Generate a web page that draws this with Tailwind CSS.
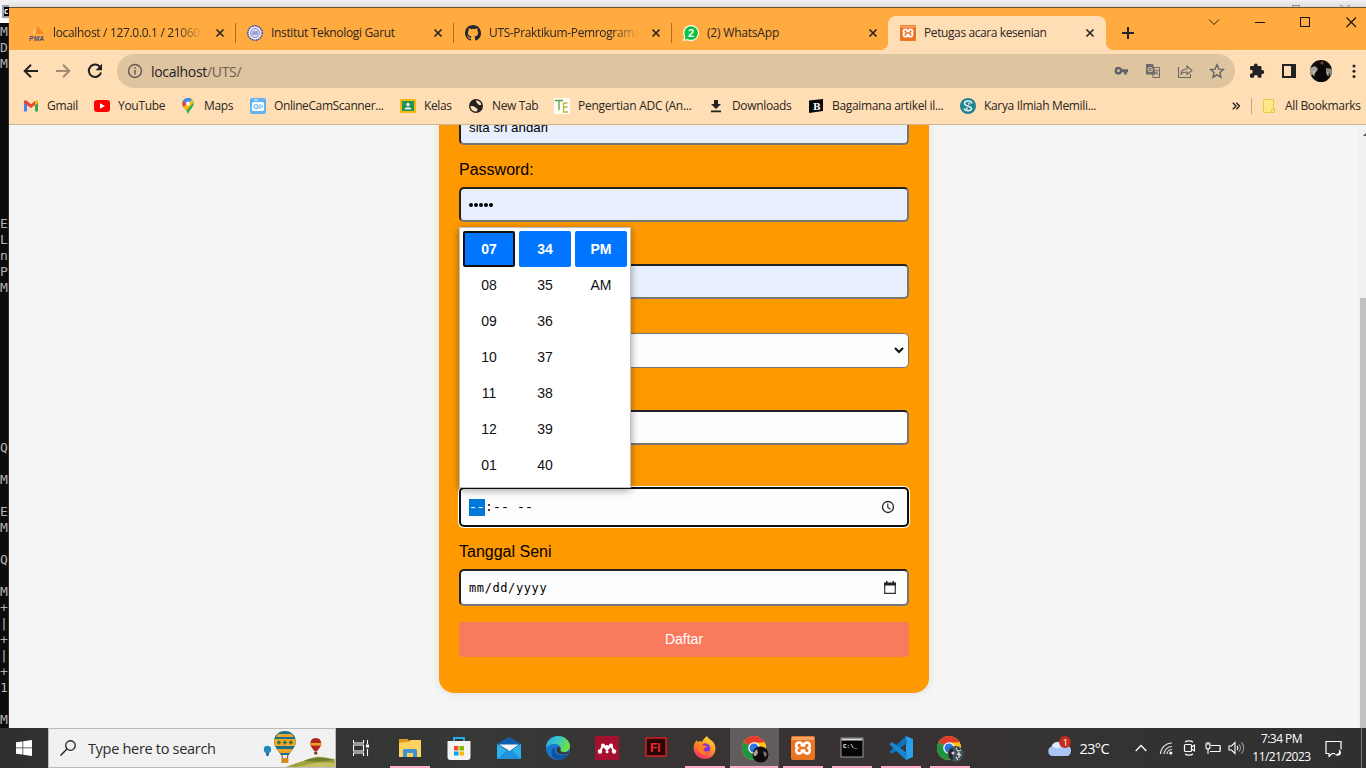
<!DOCTYPE html>
<html lang="id">
<head>
<meta charset="utf-8">
<title>Petugas acara kesenian</title>
<script src="https://cdn.jsdelivr.net/npm/@tailwindcss/browser@4"></script>
</head>
<body class="w-[1366px] h-[768px] overflow-hidden bg-white font-['Open_Sans',sans-serif] text-[#2b2622]">
<svg class="hidden">
  <defs>
    <symbol id="close" viewBox="0 0 10 10"><path d="M1.5 1.5l7 7M8.5 1.5l-7 7" stroke="#2b2622" stroke-width="1.7" fill="none"/></symbol>
    <symbol id="xampp" viewBox="0 0 24 24"><rect width="24" height="24" rx="2" fill="#e97523"/><rect x="1" y="1" width="22" height="3" fill="#f6a468"/><path d="M8 6.500a3 3 0 0 0-1.500 5.500A3 3 0 1 0 11 15.500v-1h2v1A3 3 0 1 0 17.500 12 3 3 0 1 0 13 8.500v1h-2v-1A3 3 0 0 0 8 6.500z" fill="none" stroke="#fff" stroke-width="2.600"/></symbol>
    <symbol id="chrome" viewBox="0 0 24 24"><circle cx="12" cy="12" r="12" fill="#fbc116"/><path d="M12 12L1.600 6A12 12 0 0 1 22.400 6z" fill="#e33b2e"/><path d="M1.600 6A12 12 0 0 0 12 24l5.200-9-5.200-3z" fill="#229342"/><path d="M12 6.500h10.700A12 12 0 0 1 12 24l5-9z" fill="#fbc116"/><circle cx="12" cy="12" r="5.800" fill="#fff"/><circle cx="12" cy="12" r="4.500" fill="#2a75e8"/></symbol>
  </defs>
</svg>
<div class="flex flex-col w-[1366px] h-[768px]">
  <div class="flex h-[728px]">
    <!-- console window behind the browser -->
    <div class="w-[9px] shrink-0 flex flex-col overflow-hidden bg-[#0c0c0c]">
      <div class="h-[23px] shrink-0 bg-gradient-to-b from-[#f0f0f0] to-white pt-[5px] pl-[2px]">
        <div class="w-[12px] h-[13px] bg-black border-2 border-[#9aa0a6] text-white text-[8px] leading-[8px] font-bold">c</div>
      </div>
      <pre class="pt-px w-[9px] border-r border-[#2a2a2a] overflow-hidden font-['DejaVu_Sans_Mono',monospace] text-[13px] leading-[16px] text-[#b4b4b4]">M
D
M









E
L
n
P
M









Q

M

E
M

Q

M
+
|
+
|
+
1

M</pre>
    </div>
    <!-- browser window -->
    <div class="flex-1 min-w-0 flex flex-col">
      <div class="h-[7px] shrink-0 bg-gradient-to-b from-[#f3f3f3] to-[#dcdcdc] flex justify-end items-end pr-[16px] gap-[40px]">
        <div class="w-[8px] h-[2px] border border-b-0 border-[#888]"></div>
        <svg class="w-[10px] h-[2px]" viewBox="0 0 10 2"><path d="M0 0l3 2M10 0L7 2" stroke="#888"/></svg>
      </div>
      <!-- tab strip -->
      <div class="h-[43px] shrink-0 border-t border-[#6b5330] bg-[#ffab40] flex items-end pl-[9px] text-[12px]">
        <div class="w-[218px] h-[34px] flex items-center pl-[11px] relative">
          <svg class="w-4 h-4 shrink-0" viewBox="0 0 16 16"><path d="M4 9c0-3 1-5 2-7v7z" fill="#f9c28a"/><path d="M7 9c1-3 1-5 0-8 4 2 6 5 8 8z" fill="#f58a1f"/><text x="0" y="15.500" font-family="Liberation Sans" font-size="6.500" font-weight="bold" font-style="italic" fill="#444a77" letter-spacing=".3">PMA</text></svg>
          <span class="ml-2 w-[150px] overflow-hidden whitespace-nowrap tracking-[-0.33px] [mask-image:linear-gradient(90deg,#000_82%,transparent)]">localhost / 127.0.0.1 / 21060</span>
          <svg class="w-[10px] h-[10px] ml-3"><use href="#close"/></svg>
          <div class="absolute right-0 top-[7px] w-px h-5 bg-[#a96f24]"></div>
        </div>
        <div class="w-[218px] h-[34px] flex items-center pl-[11px] relative">
          <svg class="w-4 h-4 shrink-0" viewBox="0 0 16 16"><circle cx="8" cy="8" r="7.200" fill="#eef" stroke="#3f4796" stroke-width="1.500" stroke-dasharray="1.500 .7"/><circle cx="8" cy="8" r="4.500" fill="#dcdff2" stroke="#8088c0"/><path d="M5 7h6M5 9h6" stroke="#6068b0"/></svg>
          <span class="ml-2 w-[150px] overflow-hidden whitespace-nowrap tracking-[-0.34px]">Institut Teknologi Garut</span>
          <svg class="w-[10px] h-[10px] ml-3"><use href="#close"/></svg>
          <div class="absolute right-0 top-[7px] w-px h-5 bg-[#a96f24]"></div>
        </div>
        <div class="w-[218px] h-[34px] flex items-center pl-[11px] relative">
          <svg class="w-4 h-4 shrink-0" viewBox="0 0 16 16" fill="#24292f"><path d="M8 0C3.58 0 0 3.58 0 8c0 3.54 2.29 6.53 5.47 7.59.4.07.55-.17.55-.38v-1.490c-2.010.37-2.530-.49-2.690-.94-.09-.23-.48-.94-.82-1.130-.28-.15-.68-.52-.01-.53.63-.01 1.080.58 1.230.82.72 1.210 1.870.87 2.330.66.07-.52.28-.87.51-1.070-1.780-.2-3.640-.89-3.640-3.950 0-.87.31-1.590.82-2.150-.08-.2-.36-1.020.08-2.120 0 0 .67-.21 2.200.82a7.600 7.600 0 0 1 4 0c1.530-1.040 2.200-.82 2.200-.82.44 1.100.16 1.920.08 2.120.51.56.82 1.270.82 2.150 0 3.070-1.870 3.750-3.650 3.950.29.25.54.73.54 1.480v2.200c0 .21.15.46.55.38A8.010 8.010 0 0 0 16 8c0-4.420-3.580-8-8-8z"/></svg>
          <span class="ml-2 w-[150px] overflow-hidden whitespace-nowrap tracking-[-0.36px] [mask-image:linear-gradient(90deg,#000_82%,transparent)]">UTS-Praktikum-Pemrograma</span>
          <svg class="w-[10px] h-[10px] ml-3"><use href="#close"/></svg>
          <div class="absolute right-0 top-[7px] w-px h-5 bg-[#a96f24]"></div>
        </div>
        <div class="w-[216px] h-[34px] flex items-center pl-[11px]">
          <svg class="w-4 h-4 shrink-0" viewBox="0 0 16 16"><path d="M8 0a8 8 0 1 1-3.500 15.200L0 16l1-4.500A8 8 0 0 1 8 0z" fill="#fff"/><path d="M8 1.200a6.800 6.800 0 1 1-3.300 12.700L1.600 14.500l.8-3A6.800 6.800 0 0 1 8 1.200z" fill="#0ac33c"/><text x="5" y="12" font-family="Liberation Sans" font-size="11" font-weight="bold" fill="#fff">2</text></svg>
          <span class="ml-2 w-[149px] overflow-hidden whitespace-nowrap tracking-[-0.2px]">(2) WhatsApp</span>
          <svg class="w-[10px] h-[10px] ml-3"><use href="#close"/></svg>
        </div>
        <div class="w-[218px] h-[34px] flex items-center pl-3 bg-[#ffdeb5] rounded-t-lg relative before:absolute before:bottom-0 before:-left-2 before:size-2 before:bg-[radial-gradient(circle_at_0_0,transparent_8px,#ffdeb5_8.5px)] after:absolute after:bottom-0 after:-right-2 after:size-2 after:bg-[radial-gradient(circle_at_100%_0,transparent_8px,#ffdeb5_8.5px)]">
          <svg class="w-4 h-4 shrink-0"><use href="#xampp"/></svg>
          <span class="ml-2 w-[149px] overflow-hidden whitespace-nowrap tracking-[-0.4px]">Petugas acara kesenian</span>
          <svg class="w-[10px] h-[10px] ml-3"><use href="#close"/></svg>
        </div>
        <svg class="w-[12px] h-[12px] ml-[16px] mb-[11px]" viewBox="0 0 12 12"><path d="M6 0v12M0 6h12" stroke="#222" stroke-width="2"/></svg>
        <div class="flex items-center gap-[35px] ml-[74px] mb-[22px]">
          <svg class="w-[12px] h-[12px]" viewBox="0 0 12 12"><path d="M1 3.500l5 5 5-5" fill="none" stroke="#222"/></svg>
          <svg class="w-[10px] h-[12px]" viewBox="0 0 10 12"><path d="M0 6.500h10" stroke="#111"/></svg>
          <svg class="w-[11px] h-[12px]" viewBox="0 0 11 12"><rect x=".5" y="1.500" width="9" height="9" fill="none" stroke="#111"/></svg>
          <svg class="w-[11px] h-[12px]" viewBox="0 0 11 12"><path d="M.5 1.500l9.500 9.500M10 1.500L.5 11" stroke="#111" stroke-width="1.100"/></svg>
        </div>
      </div>
      <!-- toolbar -->
      <div class="h-[38px] shrink-0 bg-[#ffdeb5] flex items-end">
        <div class="h-[34px] flex items-center pl-[14px] gap-[16px]">
          <svg class="w-4 h-4" viewBox="0 0 16 16"><path d="M15 8H2M8 1.700L1.700 8 8 14.300" fill="none" stroke="#222" stroke-width="2"/></svg>
          <svg class="w-4 h-4" viewBox="0 0 16 16"><path d="M1 8h13M8 1.700L14.300 8 8 14.300" fill="none" stroke="#a08c76" stroke-width="2"/></svg>
          <svg class="w-4 h-4" viewBox="0 0 16 16"><path d="M13.300 4.500A6.200 6.200 0 1 0 14 9.500" fill="none" stroke="#222" stroke-width="2"/><path d="M15 .8v6.400H8.600z" fill="#222"/></svg>
        </div>
        <div class="ml-[14px] w-[1118px] h-[34px] rounded-full bg-[#dfc4a0] flex items-center pl-[10px] pr-[10px]">
          <svg class="w-4 h-4" viewBox="0 0 16 16"><circle cx="8" cy="8" r="6.500" fill="none" stroke="#5f5a55" stroke-width="1.400"/><path d="M8 7v4.500M8 4.200v1.600" stroke="#5f5a55" stroke-width="1.500"/></svg>
          <span class="ml-2 text-[14px] tracking-[-0.3px] flex-1 whitespace-nowrap text-[#222]">localhost<span class="text-[#6b5e50]">/UTS/</span></span>
          <div class="flex items-center gap-4">
            <svg class="w-4 h-4" viewBox="0 0 16 16"><path d="M5.500 3.800a3.900 3.900 0 1 0 3.600 5.400H11v2.300h2.800V9.200H15V6.300H9.100a3.900 3.900 0 0 0-3.600-2.500zm0 2.500a1.400 1.400 0 1 1 0 2.800 1.400 1.400 0 0 1 0-2.800z" fill="#5f6368"/></svg>
            <svg class="w-4 h-4" viewBox="0 0 16 16"><path d="M7 4.500h7.500v10H8z" fill="none" stroke="#6b6b6b"/><path d="M1 1h7l3 10.500H1z" fill="#6b6b6b"/><text x="2.300" y="8.800" font-size="7.500" font-weight="bold" font-family="Liberation Sans" fill="#dfc4a0">G</text><path d="M9.500 7.500h4M11.500 6.500v1M13 7.500c-.5 2-1.500 3-2.500 4M11 9l2.500 3" stroke="#6b6b6b" fill="none" stroke-width=".8"/></svg>
            <svg class="w-4 h-4" viewBox="0 0 16 16"><path d="M1.500 4v10.500h12V11M4 11c.5-3.500 3-5 6-5V3l5 4.500-5 4V9c-2.500 0-4.500.5-6 2z" fill="none" stroke="#6b6b6b" stroke-width="1.100"/></svg>
            <svg class="w-4 h-4" viewBox="0 0 16 16"><path d="M8 1.800l1.900 4.300 4.600.4-3.500 3.100 1 4.600L8 11.800l-4 2.400 1-4.600L1.500 6.500l4.600-.4z" fill="none" stroke="#5f6368" stroke-width="1.400"/></svg>
          </div>
        </div>
        <div class="h-[34px] flex items-center ml-[14px]">
          <svg class="w-4 h-4" viewBox="0 0 16 16"><path d="M13.300 7H12.500V4.300c0-.8-.6-1.400-1.400-1.400H8.700V2.300a1.900 1.900 0 0 0-3.800 0v.6H2.300C1.500 2.900 1 3.500 1 4.300v2.400h.7a2 2 0 0 1 0 4H1v2.700c0 .8.5 1.400 1.300 1.400h2.600v-.7a2 2 0 0 1 4 0v.7h2.200c.8 0 1.400-.6 1.400-1.400V11h.8a2 2 0 0 0 0-4z" fill="#222"/></svg>
          <svg class="w-4 h-4 ml-4" viewBox="0 0 16 16"><path d="M1 1h14v14H1zM3 3v10h7V3z" fill="#222" fill-rule="evenodd"/></svg>
          <svg class="w-[22px] h-[22px] ml-[13px]" viewBox="0 0 22 22"><clipPath id="av"><circle cx="11" cy="11" r="11"/></clipPath><g clip-path="url(#av)"><rect width="22" height="22" fill="#0f0d0c"/><path d="M0 8l5-2 3 3-2 3-2 2-4 2z" fill="#a8a195"/><path d="M16 8l6 1v6l-2 1-1-4-2 3-1-2z" fill="#8d877d"/><circle cx="12" cy="3" r="1.500" fill="#8a3c30"/><path d="M9 6h6l2 16H8z" fill="#0a0808"/><path d="M4 11v5M18 12v4" stroke="#ddd"/></g></svg>
          <svg class="w-[4px] h-4 ml-[20px]" viewBox="0 0 4 16" fill="#222"><circle cx="2" cy="3" r="1.500"/><circle cx="2" cy="8.300" r="1.500"/><circle cx="2" cy="13.500" r="1.500"/></svg>
        </div>
      </div>
      <!-- bookmarks bar -->
      <div class="h-[37px] shrink-0 bg-[#ffdeb5] border-b border-[#cfb48e] flex items-center pl-[14px] text-[12px] whitespace-nowrap tracking-[-0.34px]">
        <div class="w-[71px] flex items-center gap-2"><svg class="w-4 h-4" viewBox="0 0 16 16"><path d="M1 3v10.500h3V7z" fill="#4285f4"/><path d="M15 3v10.500h-3V7z" fill="#34a853"/><path d="M1 3.500C1 2 3 2 4 3l4 3.200L12 3v4L8 10 4 7.200 1 5z" fill="#ea4335"/><path d="M12 3c1-1 3-1 3 .5V5l-3 2z" fill="#fbbc04"/></svg><span>Gmail</span></div>
        <div class="w-[86px] flex items-center gap-2"><svg class="w-4 h-4" viewBox="0 0 16 16"><rect y="2" width="16" height="12" rx="3" fill="#f00"/><path d="M6 5.200L11 8l-5 2.800z" fill="#fff"/></svg><span class="tracking-[-0.3px]">YouTube</span></div>
        <div class="w-[70px] flex items-center gap-2"><svg class="w-4 h-4" viewBox="0 0 16 16"><clipPath id="pin"><path d="M8 0a5.500 5.500 0 0 1 5.500 5.500C13.500 9.500 9.500 11 8 16 6.500 11 2.500 9.500 2.500 5.500A5.500 5.500 0 0 1 8 0z"/></clipPath><g clip-path="url(#pin)"><rect width="16" height="16" fill="#34a853"/><path d="M0 0h12L2 11H0z" fill="#4285f4"/><path d="M2 2l5 4-4 5-2-5z" fill="#ea4335"/><path d="M3 10l8-9 3 3-8 9z" fill="#fbbc04"/><path d="M7 0h6L9 5z" fill="#4285f4"/><path d="M14 2v14H6l7-9z" fill="#34a853"/></g><circle cx="8" cy="5.500" r="2" fill="#fff"/></svg><span>Maps</span></div>
        <div class="w-[150px] flex items-center gap-2"><svg class="w-4 h-4" viewBox="0 0 16 16"><rect width="16" height="16" rx="2" fill="#60b4f5"/><rect x="2" y="4" width="12" height="9" rx="1.500" fill="#fff"/><circle cx="6" cy="8.500" r="2" fill="none" stroke="#60b4f5" stroke-width="1.200"/><path d="M10 6v5M12 7v3" stroke="#60b4f5"/><path d="M4 2h4" stroke="#fff"/></svg><span class="tracking-[-0.4px]">OnlineCamScanner...</span></div>
        <div class="w-[68px] flex items-center gap-2"><svg class="w-4 h-4" viewBox="0 0 16 16"><rect y="1" width="16" height="14" rx="1" fill="#f4b912"/><rect x="2" y="3" width="12" height="10" fill="#23935a"/><circle cx="8" cy="6.500" r="1.700" fill="#e8f5e9"/><path d="M4.500 11.500c0-3.500 7-3.500 7 0z" fill="#d5ecd9"/></svg><span class="tracking-[-0.4px]">Kelas</span></div>
        <div class="w-[86px] flex items-center gap-2"><svg class="w-4 h-4" viewBox="0 0 16 16"><circle cx="8" cy="8" r="7" fill="#222"/><path d="M8 2.500c3 0 5 2 5.300 4.200-1.500.9-3.300 0-3.800-1.200C9 4.500 7.500 4 8 2.500zM2.500 8c2 0 4 0 5 1.500s2.500.5 2 2.500-1.500 1.500-2.500 1.500C4 13 2.500 11 2.500 8z" fill="#ffdeb5"/></svg><span class="tracking-[-0.35px]">New Tab</span></div>
        <div class="w-[154px] flex items-center gap-2"><svg class="w-4 h-4" viewBox="0 0 16 16"><rect width="16" height="16" fill="#fdfdf5"/><path d="M1 2.500h8M5 2.500V12" stroke="#59a14a" stroke-width="1.300"/><path d="M13.500 5H9.500v9h4.500M9.500 9h4" stroke="#b9b832" fill="none" stroke-width="1.300"/></svg><span class="tracking-[-0.25px]">Pengertian ADC (An...</span></div>
        <div class="w-[100px] flex items-center gap-2"><svg class="w-4 h-4" viewBox="0 0 16 16"><path d="M6 2h4v4h3l-5 5-5-5h3zM3 12.500h10v1.700H3z" fill="#222"/></svg><span>Downloads</span></div>
        <div class="w-[152px] flex items-center gap-2"><svg class="w-4 h-4" viewBox="0 0 16 16"><path d="M1 2.500L15 1v12l-14 2z" fill="#080808"/><text x="5" y="11.500" font-family="DejaVu Serif" font-size="9" font-weight="bold" fill="#fff">B</text></svg><span>Bagaimana artikel il...</span></div>
        <div class="w-[272px] flex items-center gap-2"><svg class="w-4 h-4" viewBox="0 0 16 16"><circle cx="8" cy="8" r="8" fill="#1f8391"/><path d="M12 5.500C11 2 4.500 2.500 4.500 5.500S11.500 8 11.500 10.500 5.500 14 4 10.500" fill="none" stroke="#e4f2f3" stroke-width="1.500"/><circle cx="9" cy="5.700" r="1" fill="#e4f2f3"/><circle cx="7" cy="10.500" r="1" fill="#e4f2f3"/></svg><span>Karya Ilmiah Memili...</span></div>
        <svg class="w-[8px] h-[8px]" viewBox="0 0 8 8"><path d="M.8.8L4 4 .8 7.200M4.300.8L7.500 4 4.300 7.200" fill="none" stroke="#222" stroke-width="1.400"/></svg>
        <div class="w-px h-4 bg-[#c4a982] ml-[11px]"></div>
        <svg class="w-[12px] h-[14px] ml-[11px]" viewBox="0 0 12 14"><path d="M.5.5h10v9h1v4h-11z" fill="#ffe68a" stroke="#ecc944"/><path d="M8.500 13.500v-3h3" fill="none" stroke="#ecc944"/></svg>
        <span class="ml-[10px]">All Bookmarks</span>
      </div>
      <!-- page viewport -->
      <div class="h-[603px] shrink-0 bg-[#f5f5f5] overflow-hidden flex pl-[430px] font-['Liberation_Sans',sans-serif] text-black">
        <div class="w-[490px] h-[568px] shrink-0 px-5 bg-[#ff9900] rounded-b-[15px] shadow-[0_0_10px_rgba(0,0,0,0.1)] flex flex-col relative">
          <div class="-mt-[15px] h-[35px] shrink-0 rounded-[5px] border-2 border-[#222] border-r-[#767676] border-b-[#767676] bg-[#e8f0fe] px-2 text-[13.3px] leading-[31px]">sita sri andari</div>
          <label class="mt-[16px] h-[18px] leading-[18px] text-[16px]">Password:</label>
          <div class="mt-[8px] h-[35px] rounded-[5px] border-2 border-[#222] border-r-[#767676] border-b-[#767676] bg-[#e8f0fe] px-[8px] flex items-center gap-px">
            <i class="size-[4px] rounded-full bg-black"></i><i class="size-[4px] rounded-full bg-black"></i><i class="size-[4px] rounded-full bg-black"></i><i class="size-[4px] rounded-full bg-black"></i><i class="size-[4px] rounded-full bg-black"></i>
          </div>
          <div class="mt-[42px] h-[35px] rounded-[5px] border-2 border-[#222] border-r-[#767676] border-b-[#767676] bg-[#e8f0fe]"></div>
          <div class="mt-[34px] h-[35px] rounded-[5px] border border-[#767676] bg-[#fdfdfd] flex items-center justify-end pr-[4px]">
            <svg class="w-[10px] h-[7px]" viewBox="0 0 10 7"><path d="M1 1l4 4 4-4" fill="none" stroke="#111" stroke-width="2.100"/></svg>
          </div>
          <div class="mt-[42px] h-[35px] rounded-[5px] border-2 border-[#222] border-r-[#767676] border-b-[#767676] bg-[#fdfdfd]"></div>
          <div class="mt-[42px] h-[40px] rounded-[5px] border-2 border-[#101010] bg-[#fdfdfd] ring-1 ring-white flex items-center justify-between pl-[8px] pr-[12px] font-['Liberation_Mono',monospace] text-[13px]">
            <div class="flex items-center whitespace-pre"><span class="bg-[#0078d7] text-white h-[17px] leading-[18px] w-[16px]">--</span><span class="leading-[19px] tracking-[0.2px]">:-- --</span></div>
            <svg class="w-[14px] h-[14px]" viewBox="0 0 14 14"><circle cx="7" cy="7" r="5.500" fill="none" stroke="#222" stroke-width="1.300"/><path d="M6.800 3.500v4l2.700 1.700" fill="none" stroke="#222" stroke-width="1.100"/></svg>
          </div>
          <label class="mt-[16px] h-[18px] leading-[18px] text-[16px]">Tanggal Seni</label>
          <div class="mt-[8px] h-[37px] rounded-[5px] border-2 border-[#222] border-r-[#767676] border-b-[#767676] bg-[#fdfdfd] flex items-center justify-between pl-[8px] pr-[11px]">
            <span class="font-['DejaVu_Sans_Mono',monospace] text-[12px] tracking-[0.6px]">mm/dd/yyyy</span>
            <svg class="w-[12px] h-[14px]" viewBox="0 0 12 14"><path d="M.7 3v9.300h10.600V3" fill="none" stroke="#333" stroke-width="1.200"/><path d="M0 1.500h12v3H0zM2 0h1.500v2H2zM8.500 0H10v2H8.500z" fill="#222"/></svg>
          </div>
          <button class="mt-[16px] h-[35px] rounded-[3px] bg-[#fa7a5e] text-white text-[14px]">Daftar</button>
          <!-- time picker -->
          <div class="absolute left-[20px] top-[102px] w-[172px] h-[261px] border border-[#bfbfbf] bg-white shadow-[0_2px_8px_rgba(0,0,0,0.4)] p-[3px] flex gap-1 text-[14px] text-[#101010] text-center leading-[36px]">
            <div class="w-[52px]"><div class="h-9 leading-[32px] bg-[#0075ff] border-2 border-[#101010] rounded-[2px] text-white font-bold">07</div><div>08</div><div>09</div><div>10</div><div>11</div><div>12</div><div>01</div></div>
            <div class="w-[52px]"><div class="h-9 bg-[#0075ff] rounded-[2px] text-white font-bold">34</div><div>35</div><div>36</div><div>37</div><div>38</div><div>39</div><div>40</div></div>
            <div class="w-[52px]"><div class="h-9 bg-[#0075ff] rounded-[2px] text-white font-bold">PM</div><div>AM</div></div>
          </div>
        </div>
        <div class="w-[8px] ml-auto bg-[#f1f1f1] flex flex-col items-end">
          <svg class="w-[3px] h-[4px] mt-[7px]" viewBox="0 0 3 4"><path d="M0 4l3-3v3z" fill="#505050"/></svg>
          <div class="w-[6px] h-[430px] mt-[162px] bg-[#c1c1c1]"></div>
        </div>
      </div>
    </div>
  </div>
  <!-- taskbar -->
  <div class="h-10 shrink-0 bg-[linear-gradient(90deg,#2f3030_0%,#363836_35%,#3a3333_52%,#393233_65%,#333_80%,#303030_100%)] flex text-white">
    <div class="w-12 flex items-center justify-center"><svg class="w-4 h-4" viewBox="0 0 16 16" fill="#fff"><path d="M0 2.300L6.500 1.400v6.200H0zM7.200 1.300L16 0v7.600H7.200zM0 8.300h6.500v6.300L0 13.700zM7.200 8.300H16V16l-8.800-1.300z"/></svg></div>
    <div class="w-[288px] bg-[#f1f1f1] border border-[#bcbcbc] flex items-center pl-[11px] text-[#2b2b2b] overflow-hidden">
      <svg class="w-4 h-4" viewBox="0 0 16 16"><circle cx="10.500" cy="5.500" r="4.800" fill="none" stroke="#222" stroke-width="1.300"/><path d="M7 9L.5 15.500" stroke="#222" stroke-width="1.400"/></svg>
      <span class="ml-[12px] mt-px w-[175px] text-[14.5px] tracking-[-0.3px] whitespace-nowrap">Type here to search</span>
      <svg class="w-[73px] h-[38px]" viewBox="0 0 73 38">
        <path d="M24 38c10-4 18-6 26-9 8-3 15 0 23 1v8z" fill="#9fa23c"/><path d="M34 38c12-2 20-6 39-4v4z" fill="#c8bf62"/><path d="M42 32c8-4 20-4 30-1-12 2-20 2-30 1z" fill="#6f7f2f"/>
        <circle cx="5.500" cy="20.500" r="3.700" fill="#2388c4"/><path d="M4 24h3l-.5 3h-2z" fill="#185f8a"/>
        <path d="M23 2c7 0 11 5 11 11 0 5-5 9-7 13h-8c-2-4-7-8-7-13C12 7 16 2 23 2z" fill="#1d6f86"/><path d="M12.500 10h21l.5 3-1 4H13l-1-4z" fill="#eca92a"/><path d="M15 20h16l-3 4H18z" fill="#e8a429"/><path d="M16 5h14l2 3H14z" fill="#e6a52c"/><path d="M17 11.500v4M15 13.500h4M23 11.500v4M21 13.500h4M29 11.500v4M27 13.500h4" stroke="#2c6c3c" stroke-width="1.300"/><path d="M20 26l.5 4M26 26l-.5 4" stroke="#735"/><rect x="19.500" y="29" width="7" height="5" fill="#d38c1d"/>
        <path d="M54 9c4 0 5.500 3 5.500 6 0 3-3 5-4 7h-3c-1-2-4-4-4-7s1.500-6 5.500-6z" fill="#b3261e"/><path d="M48.700 14h10.600v2.500H48.700z" fill="#eaa42a"/><rect x="52.500" y="22.500" width="3" height="3" fill="#8a3519"/>
      </svg>
    </div>
    <div class="flex">
      <div class="w-[49.2px] flex items-center justify-center"><svg class="w-4 h-4" viewBox="0 0 16 16"><path d="M.5 0v3h10V0M.5 16v-3h10v3M.5 5v6h10V5zM14.500 0v4M14.500 9v7" fill="none" stroke="#fff" stroke-width="1.100"/><path d="M13 4.500h3v3h-3z" fill="#fff"/></svg></div>
      <div class="w-[49.2px] flex flex-col items-center justify-between"><svg class="w-6 h-6 mt-2 ml-px" viewBox="0 0 24 24"><path d="M1 3h9l1 2v3H1z" fill="#dd9a1c"/><path d="M1 7l10-1.500L12 4h11v17H1z" fill="#ffd161"/><path d="M5 21v-7l1-1h12l1 1v7h-4v-4H9v4z" fill="#3f94d6"/></svg><i class="w-10 h-[2px] ml-px bg-[#ffaccb]"></i></div>
      <div class="w-[49.2px] flex justify-center"><svg class="w-6 h-6 mt-2" viewBox="0 0 24 24"><path d="M7 6V2h10v4" fill="none" stroke="#2ba9e8" stroke-width="2"/><path d="M.5 5h23v16a3 3 0 0 1-3 3h-17a3 3 0 0 1-3-3z" fill="#f3f3f3"/><path d="M7 10h4.500v4.500H7z" fill="#f25022"/><path d="M12.500 10H17v4.500h-4.500z" fill="#7fba00"/><path d="M7 15.500h4.500v4H7z" fill="#00a4ef"/><path d="M12.500 15.500H17v4h-4.500z" fill="#ffb900"/></svg></div>
      <div class="w-[49.2px] flex justify-center"><svg class="w-6 h-6 mt-2 ml-[2px]" viewBox="0 0 24 24"><path d="M0 8l12-7 12 7v6H0z" fill="#0f5fb0"/><path d="M0 8l12 8L24 8v15H0z" fill="#2fb2ec"/><path d="M0 23L13 12l11 11z" fill="#1f93dd"/><path d="M2 8.500h20L12.500 15z" fill="#f4f4f4"/></svg></div>
      <div class="w-[49.2px] flex justify-center"><svg class="w-6 h-6 mt-2 ml-[2px]" viewBox="0 0 24 24"><defs><linearGradient id="eg" x1="0" y1="0" x2="1" y2=".4"><stop offset="0" stop-color="#2aa5e8"/><stop offset=".5" stop-color="#36c6c8"/><stop offset="1" stop-color="#6fe04a"/></linearGradient></defs><circle cx="12" cy="12" r="12" fill="#1976cf"/><path d="M0 12C0 5 5 0 12 0s12 5 12 10c0 4-3 6-6 6-3 0-4-1-3.500-2.500C15.500 11 13 8 9 8c-5 0-8 2-9 4z" fill="url(#eg)"/><path d="M9 11c-2 6 3 11 13 7-3 5-8 6.500-12 5.500C4 21 4 13 9 11z" fill="#104f99"/><path d="M14.500 13.500c-1 3 5 4 8.500 1.500l-.5 2c-6 3-12 1-12-3 0-2 1-3 1.500-3 2 0 3 1 2.500 2.500z" fill="#373736"/></svg></div>
      <div class="w-[49.2px] flex justify-center"><svg class="w-6 h-6 mt-2 ml-px" viewBox="0 0 24 24"><rect width="24" height="24" fill="#a5112f"/><path d="M5 15.500L8 9.500l4 4 4-4 3 6" fill="none" stroke="#fff" stroke-width="2"/><circle cx="8" cy="9.500" r="2" fill="#fff"/><circle cx="16" cy="9.500" r="2" fill="#fff"/><circle cx="12" cy="11.500" r="2.400" fill="#fff"/><circle cx="5" cy="15.500" r="2.200" fill="#fff"/><circle cx="12" cy="15.800" r="1.500" fill="#fff"/><circle cx="19" cy="15.500" r="2.200" fill="#fff"/></svg></div>
      <div class="w-[49.2px] flex justify-center"><svg class="w-6 h-6 mt-2" viewBox="0 0 24 24"><rect x="2" y="2" width="20" height="18" fill="#2a0505" stroke="#d61f1f" stroke-width="1.500"/><text x="6" y="15.500" font-family="Liberation Sans" font-size="12" font-weight="bold" fill="#f02a2a">Fl</text></svg></div>
      <div class="w-[49.2px] flex flex-col items-center justify-between"><svg class="w-6 h-6 mt-2" viewBox="0 0 24 24"><defs><linearGradient id="ff" x1=".8" y1="0" x2=".3" y2="1"><stop offset="0" stop-color="#ffe23d"/><stop offset=".45" stop-color="#ff9a1f"/><stop offset="1" stop-color="#f5246e"/></linearGradient></defs><path d="M14 0c1 3 5 4 7 7 4 8-1 16-9 16S-1 16 1 9c1-3 2-4 3-5v2c2-1 4-1 5 0 1-3 3-4 5-6z" fill="url(#ff)"/><circle cx="12" cy="12.500" r="5.300" fill="#8433d8"/><path d="M4 8c3-1 5 0 7 1.500 2 .5 3 0 3 1-1 1.500-3 1-3.500 3s3 3 5.500 1c-1 5-9 5-11 0z" fill="#ff7d1f"/></svg><i class="w-10 h-[2px] bg-[#ffaccb]"></i></div>
      <div class="w-[49.2px] flex flex-col items-center justify-between bg-[#625d5d]"><svg class="w-[27px] h-[27px] mt-2 ml-[2px]" viewBox="0 0 27 27"><use href="#chrome" width="24" height="24"/><circle cx="18.500" cy="18.500" r="8" fill="#0f0c0b"/><path d="M11 17l4-4 1 4-2 3-2 0z" fill="#a8a195"/><path d="M21 15l4 2-1 4-2-1z" fill="#77726a"/></svg><i class="w-12 h-[2px] bg-[#ffaccb]"></i></div>
      <div class="w-[49.2px] flex flex-col items-center justify-between"><svg class="w-6 h-6 mt-2"><use href="#xampp"/></svg><i class="w-10 h-[2px] bg-[#ffaccb]"></i></div>
      <div class="w-[49.2px] flex flex-col items-center justify-between"><svg class="w-6 h-6 mt-2" viewBox="0 0 24 24"><rect x="1" y="2" width="22" height="19" fill="#050505" stroke="#9a9a9a"/><path d="M1.500 3.500h21" stroke="#d8d8d8" stroke-width="2"/><text x="3" y="12" font-family="Liberation Mono" font-size="6" font-weight="bold" fill="#fff">C:\_</text></svg><i class="w-10 h-[2px] bg-[#ffaccb]"></i></div>
      <div class="w-[49.2px] flex flex-col items-center justify-between"><svg class="w-6 h-6 mt-2 mr-[2px]" viewBox="0 0 24 24"><path d="M17 0l7 3v18l-7 3z" fill="#2a9fea"/><path d="M17 0L.5 15.500 3 18 18 7z" fill="#0f73b9"/><path d="M17 24L.5 8.500 3 6l15 11z" fill="#1787d2"/></svg><i class="w-10 h-[2px] mr-[2px] bg-[#ffaccb]"></i></div>
      <div class="w-[49.2px] flex flex-col items-center justify-between"><svg class="w-[27px] h-[27px] mt-2" viewBox="0 0 27 27"><use href="#chrome" width="24" height="24"/><circle cx="18.500" cy="18" r="8" fill="#44515c"/><path d="M13 14c2-3 4-1 3 2s1 5-1 8c-3-2-4-7-2-10z" fill="#1d2433"/><circle cx="16" cy="17" r="1.600" fill="#e8c9b5"/><path d="M19 12l2 3 3-1M20 18l4 1M19 21l2 3M22 16v6" stroke="#d5dde2" stroke-width="1.300"/></svg><i class="w-10 h-[2px] mr-[2px] bg-[#ffaccb]"></i></div>
    </div>
    <!-- tray -->
    <div class="flex-1 flex items-center pl-[72px]">
      <svg class="w-[26px] h-6 shrink-0 mb-px" viewBox="0 0 26 24"><path d="M5 20a5 5 0 0 1-.5-9.500C6 5 14 4 16 9c5-1 8 2 8 5.500S22 20 20 20z" fill="#a9c6f5"/><path d="M5 10c2-5 9-5 11 0-4 3-8 3-11 0z" fill="#dfeafc"/><circle cx="18" cy="6" r="6" fill="#c42b1c"/><text x="15.800" y="9.500" font-family="Open Sans" font-size="9.500" fill="#fff">1</text></svg>
      <span class="ml-[6px] mt-px w-[56px] shrink-0 text-[14.5px] tracking-[-0.6px]">23°C</span>
      <svg class="w-[12px] h-[8px] shrink-0" viewBox="0 0 12 8"><path d="M.7 7L6 1.500 11.300 7" fill="none" stroke="#fff" stroke-width="1.300"/></svg>
      <svg class="w-[14px] h-[14px] shrink-0 ml-[12px]" viewBox="0 0 14 14"><path d="M1.500 13A11.500 11.500 0 0 1 13 2M5 13a8 8 0 0 1 8-7.500M8 13a5 5 0 0 1 5-4.500" fill="none" stroke="#ddd" stroke-width="1.200"/><circle cx="11.800" cy="12" r="1.600" fill="#fff"/></svg>
      <svg class="w-[13px] h-4 shrink-0 ml-[10px]" viewBox="0 0 13 16"><rect x="1.500" y="4.500" width="7" height="7" rx="1" fill="none" stroke="#fff" stroke-width="1.200"/><path d="M8.500 7l3-2v6l-3-2M2 2c2-1.500 6-1.500 8 0M2 14c2 1.500 6 1.500 8 0" fill="none" stroke="#fff" stroke-width="1.100"/></svg>
      <svg class="w-4 h-[14px] shrink-0 ml-[9px]" viewBox="0 0 16 14"><path d="M6 4.500h9v6H5M1 3h4v3a2 2 0 0 1-4 0zM2 1v2M4 1v2M3 8v5" fill="none" stroke="#fff" stroke-width="1.100"/><path d="M15 6.500h1v2h-1z" fill="#fff"/></svg>
      <svg class="w-[17px] h-[14px] shrink-0 ml-[7px]" viewBox="0 0 17 14"><path d="M1 5h2.500L7 1.500v11L3.500 9H1z" fill="none" stroke="#fff" stroke-width="1.100"/><path d="M9 5c1 1 1 3 0 4" fill="none" stroke="#fff" stroke-width="1.100"/><path d="M11 3.500c2 2 2 5 0 7M13.500 1.500c3 3 3 8 0 11" fill="none" stroke="#999" stroke-width="1.100"/></svg>
      <div class="ml-[6px] w-[60px] shrink-0 text-center text-[12px] leading-[18px] tracking-[-0.55px] whitespace-nowrap"><div>7:34 PM</div><div>11/21/2023</div></div>
      <svg class="w-[17px] h-[17px] shrink-0 ml-[14px]" viewBox="0 0 17 17"><path d="M10 13.500H7l-3 3v-3H1v-12h15v8" fill="none" stroke="#fff" stroke-width="1.200"/><path d="M13.500 9.500c2 3-1 5.500-4 4.500 1 2.500 6.500 2.500 6.500-1.500 0-1.500-1-2.500-2.500-3z" fill="#fff"/></svg>
      <div class="w-px h-10 shrink-0 bg-[#777] ml-[19px]"></div>
    </div>
  </div>
</div>
</body>
</html>
